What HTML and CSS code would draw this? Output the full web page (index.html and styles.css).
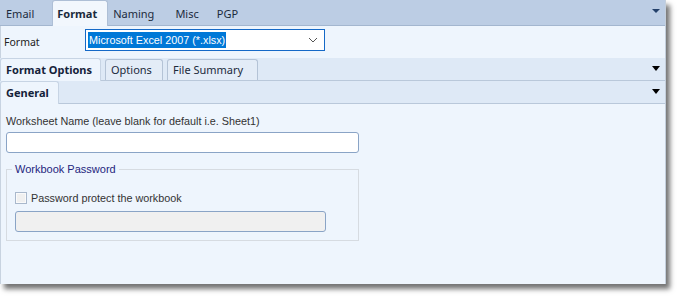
FILE: index.html
```html
<!DOCTYPE html>
<html lang="en">

<head>
    <meta charset="UTF-8">
    <meta name="viewport" content="width=device-width, initial-scale=1.0">
    <title>Format</title>
    <link rel="stylesheet" href="styles.css">
</head>

<body>
    <div class="window">
        <div class="tabbar top">
            <div class="tabs">
                <span class="tab email">Email</span>
                <span class="tab active">Format</span>
                <span class="tab naming">Naming</span>
                <span class="tab misc">Misc</span>
                <span class="tab pgp">PGP</span>
            </div>
            <span class="arrow navy"></span>
        </div>

        <div class="format-row">
            <label class="label">Format</label>
            <div class="select">
                <span class="selected">Microsoft Excel 2007 (*.xlsx)</span>
                <svg class="chev" width="10" height="6" viewBox="0 0 10 6">
                    <path d="M1 1 L5 5 L9 1" fill="none" stroke="#555" stroke-width="1" />
                </svg>
            </div>
        </div>

        <div class="tabbar sub">
            <div class="tabs">
                <span class="tab active w-format">Format Options</span>
                <span class="tab w-options">Options</span>
                <span class="tab w-summary">File Summary</span>
            </div>
            <span class="arrow"></span>
        </div>

        <div class="tabbar sub">
            <div class="tabs">
                <span class="tab active w-general">General</span>
            </div>
            <span class="arrow"></span>
        </div>

        <div class="content">
            <p class="field-label">Worksheet Name (leave blank for default i.e. Sheet1)</p>
            <div class="input"></div>

            <fieldset class="group">
                <legend>Workbook Password</legend>
                <div class="check-row">
                    <span class="checkbox"></span>
                    <span>Password protect the workbook</span>
                </div>
                <div class="input disabled"></div>
            </fieldset>
        </div>
    </div>
</body>

</html>
```

FILE: styles.css
```css
body {
    margin: 0;
    padding-bottom: 16px;
    background-color: #fff;
    font-family: "Liberation Sans", Arial, sans-serif;
}

.window {
    width: 666px;
    height: 284px;
    display: flex;
    flex-direction: column;
    background-color: #eef5fd;
    box-shadow: 4px 5px 5px rgba(0, 0, 0, 0.55);
    border-right: 1px solid #c4cfdc;
    box-sizing: border-box;
}

.tabbar {
    display: flex;
    justify-content: space-between;
    align-items: flex-end;
    font-family: "Noto Sans", "Open Sans", sans-serif;
    font-size: 11px;
}

.tabbar.top {
    height: 26px;
    background-color: #bccde4;
    border-bottom: 1px solid #a3b6cf;
    box-sizing: border-box;
}

.tabbar.sub {
    height: 23px;
    background-color: #dee9f6;
    border-bottom: 1px solid #b9c8da;
    box-sizing: border-box;
}

.tabs {
    display: flex;
    align-items: flex-end;
    height: 100%;
}

.tab {
    color: #1b2a3c;
    line-height: 22px;
}

/* top strip */
.top .tab {
    padding: 0;
    line-height: 23px;
}

.top .email {
    margin: 0 18px 0 6px;
}

.top .naming {
    margin-left: 5px;
}

.top .misc {
    margin-left: 21px;
}

.top .pgp {
    margin-left: 18px;
}

.top .tab.active {
    font-weight: bold;
    background-color: #f2f7fd;
    border: 1px solid #aebfd6;
    border-bottom: none;
    border-radius: 3px 3px 0 0;
    padding: 0 10px 0 4px;
    margin-bottom: -1px;
    line-height: 25px;
}

/* sub strips */
.sub .tab {
    border: 1px solid #b4c3d6;
    border-bottom: none;
    border-radius: 3px 3px 0 0;
    padding-left: 5px;
    line-height: 20px;
    background-color: #e3ecf7;
    box-sizing: border-box;
}

.sub .tab.active {
    font-weight: bold;
    color: #14223a;
    background-color: #eef5fd;
    border-color: #c7d4e4;
    margin-bottom: -1px;
    padding-bottom: 1px;
    line-height: 21px;
}

.w-format {
    width: 101px;
}

.w-options {
    width: 58px;
    margin-left: 4px;
}

.w-summary {
    width: 91px;
    margin-left: 4px;
}

.w-general {
    width: 59px;
}

.arrow {
    width: 0;
    height: 0;
    border-left: 4.5px solid transparent;
    border-right: 4.5px solid transparent;
    border-top: 5px solid #000;
    margin: 0 5px 9px 0;
}

.arrow.navy {
    border-top-color: #23406a;
    border-top-width: 4px;
    margin-bottom: 12px;
}

.format-row {
    height: 32px;
    display: flex;
    align-items: flex-start;
    padding-top: 3px;
    box-sizing: border-box;
    color: #222;
    border-left: 1px solid #c8d3e0;
}

.label {
    width: 84px;
    padding: 6px 0 0 3px;
    box-sizing: border-box;
    font-family: "Noto Sans", sans-serif;
    font-size: 10.5px;
}

.select {
    width: 240px;
    height: 22px;
    box-sizing: border-box;
    border: 1px solid #1569c7;
    background-color: #fff;
    display: flex;
    align-items: center;
    justify-content: space-between;
    padding: 0 6px 0 2px;
}

.selected {
    background-color: #0078d7;
    color: #fff;
    font-size: 10.8px;
    line-height: 16px;
    padding: 0 1px;
}

.content {
    flex: 1;
    padding: 11px 0 0 5px;
    border-left: 1px solid #c8d3e0;
    font-size: 10.8px;
    color: #333;
}

.field-label {
    margin: 0 0 5px;
}

.input {
    width: 353px;
    height: 21px;
    box-sizing: border-box;
    border: 1px solid #8aa4c6;
    border-radius: 3px;
    background-color: #fff;
}

.group {
    width: 353px;
    box-sizing: border-box;
    margin: 10px 0 0;
    padding: 17px 0 8px 8px;
    border: 1px solid #d6dbe1;
    display: flex;
    flex-direction: column;
    gap: 7px;
}

.group legend {
    color: #25257e;
    padding: 0 3px;
    margin-left: -3px;
    font-size: 11px;
}

.check-row {
    display: flex;
    align-items: center;
    gap: 4px;
    color: #333;
}

.checkbox {
    width: 12px;
    height: 12px;
    box-sizing: border-box;
    border: 1px solid #a9b8cc;
    background-color: #f0f0f0;
    box-shadow: inset 0 0 0 1px #fafafa;
}

.input.disabled {
    width: 311px;
    background-color: #f0f0f0;
}
```
